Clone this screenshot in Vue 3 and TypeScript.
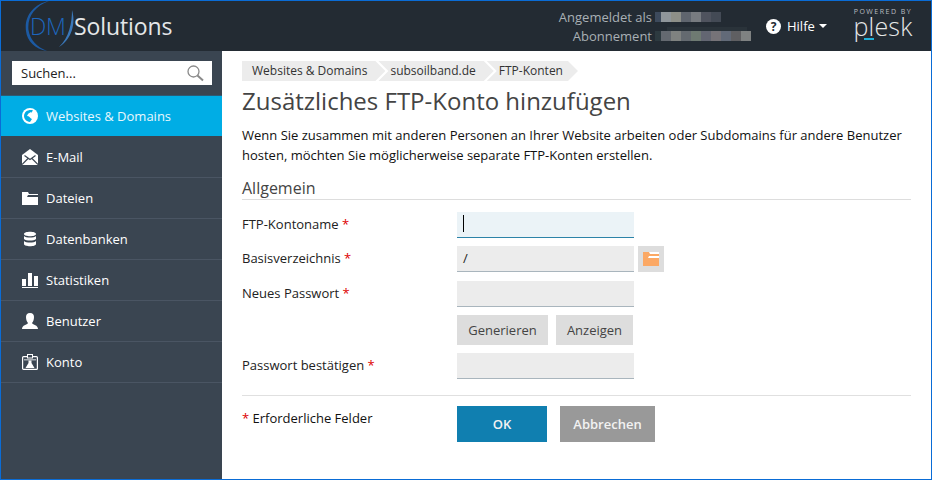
<script setup lang="ts">
const nav = [
  { label: 'Websites & Domains', icon: 'globe', active: true },
  { label: 'E-Mail', icon: 'mail' },
  { label: 'Dateien', icon: 'folder' },
  { label: 'Datenbanken', icon: 'db' },
  { label: 'Statistiken', icon: 'stats' },
  { label: 'Benutzer', icon: 'user' },
  { label: 'Konto', icon: 'badge' },
]
const row1 = ['#3d4a5c', '#8f969b', '#8d8f88', '#5f656e', '#777b80', '#4f535e', '#434a55']
const row2 = ['#2d3a40', '#646970', '#7f8280', '#646a70', '#6e7a72', '#636672', '#767378', '#626a78', '#5f5f62', '#7f8282']
</script>

<template>
  <div class="window">
    <header class="top">
      <div class="logo">
        <svg class="swoosh" width="56" height="50" viewBox="0 0 56 50">
          <path d="M24 0C8 3 -1 16 1 30C2 40 10 48 22 50C12 46 5 39 3.5 29C2 16 10 5 24 0Z" fill="#1c5aa3" />
          <path d="M47 9C51 22 47 38 34 46C44 37 47 22 47 9Z" fill="#3a78ba" />
        </svg>
        <span class="dm">DM</span><span class="sol">Solutions</span>
      </div>
      <div class="account">
        <span class="faint"></span>
        <div class="acc-row">
          <span>Angemeldet als</span>
          <span class="pix"><i v-for="(c, i) in row1" :key="i" :style="{ background: c }"></i></span>
        </div>
        <div class="acc-row">
          <span>Abonnement</span>
          <span class="pix"><i v-for="(c, i) in row2" :key="i" :style="{ background: c }"></i></span>
        </div>
      </div>
      <div class="help">
        <span class="q">?</span>
        <span>Hilfe</span>
        <span class="caret-down"></span>
      </div>
      <div class="plesk">
        <span class="powered">POWERED BY</span>
        <span class="plesk-word">plesk</span>
        <span class="plesk-bar"></span>
      </div>
    </header>

    <div class="body">
      <aside class="side">
        <div class="search-wrap">
          <div class="search">
            <span>Suchen...</span>
            <svg width="18" height="18" viewBox="0 0 18 18" fill="none" stroke="#8a8a8a">
              <circle cx="7.5" cy="7.5" r="5.5" stroke-width="1.3" />
              <path d="M11.5 11.5L17 16.5" stroke-width="2" />
            </svg>
          </div>
        </div>
        <nav>
          <a v-for="n in nav" :key="n.label" class="nav-item" :class="{ active: n.active }">
            <svg width="16" height="16" viewBox="0 0 16 16" fill="#fff">
              <template v-if="n.icon === 'globe'">
                <circle cx="8" cy="8" r="8" />
                <path d="M4 3.5C6 2 9 1.6 11 2.5L9 5 6.5 5.5 5 8l3 .5 2 2.5-2 3C4.5 13.5 2 11 2 8c0-2 1-3.5 2-4.5z" fill="#00ade5" />
                <path d="M5.5 7l3-3 1 1.5-2 2 2.5 1 1 2.5-2-.5-2-2z" fill="#fff" />
              </template>
              <template v-else-if="n.icon === 'mail'">
                <path d="M0 6L8 0l8 6v10H0z" />
                <path d="M2.5 6.5L8 10.5l5.5-4M0 15.5L6 9.5M16 15.5L10 9.5" fill="none" stroke="#3a4551" stroke-width="1.2" />
              </template>
              <template v-else-if="n.icon === 'folder'">
                <path d="M0 2h6l1 2h9v1H6L5 7h11v8H0z" />
              </template>
              <template v-else-if="n.icon === 'db'">
                <path d="M2 3c0-3 12-3 12 0s-12 3-12 0zM2 5c2 2 10 2 12 0v3c-2 2-10 2-12 0zM2 10c2 2 10 2 12 0v3c0 3-12 3-12 0z" />
              </template>
              <template v-else-if="n.icon === 'stats'">
                <path d="M0 7h4v7H0zM6 1h4v13H6zM12 4h4v10h-4zM0 15h16v1H0z" />
              </template>
              <template v-else-if="n.icon === 'user'">
                <path d="M8 0c3 0 4 2 4 4 0 3-1 5-2 6 1 2 6 2 6 6H0c0-4 5-4 6-6-1-1-2-3-2-6 0-2 1-4 4-4z" />
              </template>
              <template v-else>
                <rect x="0.6" y="2.6" width="14.8" height="12.8" rx="1" fill="none" stroke="#fff" stroke-width="1.2" />
                <rect x="5.5" y="0.5" width="5" height="3.5" fill="#3a4551" stroke="#fff" />
                <rect x="2" y="5" width="12" height="1.5" fill="#a9b0b5" />
                <path d="M6.5 6.5h3v2.5l3 5h-9l3-5z" />
              </template>
            </svg>
            <span>{{ n.label }}</span>
          </a>
        </nav>
      </aside>

      <main class="main">
        <div class="crumbs">
          <span class="crumb">Websites &amp; Domains</span>
          <span class="crumb">subsoilband.de</span>
          <span class="crumb">FTP-Konten</span>
        </div>
        <h1>Zusätzliches FTP-Konto hinzufügen</h1>
        <p class="intro">Wenn Sie zusammen mit anderen Personen an Ihrer Website arbeiten oder Subdomains für andere Benutzer hosten, möchten Sie möglicherweise separate FTP-Konten erstellen.</p>
        <h2>Allgemein</h2>

        <div class="form">
          <label>FTP-Kontoname <b>*</b></label>
          <div class="input focus"><span class="cursor"></span></div>

          <label>Basisverzeichnis <b>*</b></label>
          <div class="with-btn">
            <div class="input">/</div>
            <span class="folder-btn">
              <svg width="16" height="14" viewBox="0 0 16 14">
                <rect width="16" height="14" fill="#fff" />
                <path d="M0 0h6l1 2h9v2H6L5 6h11v8H0z" fill="#fba864" />
              </svg>
            </span>
          </div>

          <label class="third">Neues Passwort <b>*</b></label>
          <div class="input third"></div>

          <span></span>
          <div class="pw-btns">
            <span class="btn">Generieren</span>
            <span class="btn anz">Anzeigen</span>
          </div>

          <label>Passwort bestätigen <b>*</b></label>
          <div class="input"></div>
        </div>

        <div class="foot">
          <span class="req"><b>*</b> Erforderliche Felder</span>
          <div class="actions">
            <span class="act ok">OK</span>
            <span class="act cancel">Abbrechen</span>
          </div>
        </div>
      </main>
    </div>
  </div>
</template>

<style>
html, body { margin: 0; background: #fff; }
</style>

<style scoped>
.window {
  box-sizing: border-box;
  width: 932px;
  height: 480px;
  border: 1px solid #0a6cd6;
  display: flex;
  flex-direction: column;
  font: 13px/18px "Open Sans", sans-serif;
  color: #222;
  overflow: hidden;
}
.top {
  height: 50px;
  flex: none;
  background: #232b33;
  display: flex;
  align-items: center;
}
.logo {
  position: relative;
  width: 300px;
  height: 50px;
  flex: none;
  display: flex;
  align-items: center;
  padding-left: 29px;
  box-sizing: border-box;
  font-size: 23px;
  font-weight: 300;
}
.swoosh { position: absolute; left: 24px; top: 0; }
.dm { color: #1d66bd; position: relative; font-size: 23px; width: 44px; letter-spacing: -0.3px; }
.sol { color: #e4e6e8; position: relative; font-weight: 400; letter-spacing: -0.1px; }
.account {
  position: relative;
  width: 450px;
  flex: none;
  color: #a9b0b5;
  display: flex;
  flex-direction: column;
}
.faint { position: absolute; left: 366px; top: 20px; width: 80px; height: 10px; background: #2a333a; }
.acc-row {
  display: flex;
  height: 19px;
  align-items: center;
  position: relative;
}
.acc-row > span:first-child { width: 351px; flex: none; text-align: right; }
.pix { display: flex; margin-left: 3px; }
.pix i { display: block; width: 10px; height: 10px; }
.pix i:first-child { width: 6px; }
.help {
  flex: none;
  display: flex;
  align-items: center;
  color: #fff;
  gap: 6px;
  margin-left: 15px;
  width: 87px;
}
.q {
  width: 15px; height: 15px; border-radius: 50%;
  background: #fff; color: #232b33;
  font-weight: 700; font-size: 12px; line-height: 15px;
  text-align: center;
}
.caret-down {
  width: 0; height: 0; margin-left: -2px;
  border: 4px solid transparent; border-top-color: #fff; border-bottom: 0;
}
.plesk {
  position: relative;
  flex: none;
  width: 60px;
  height: 50px;
  color: #e5e7e8;
  display: flex;
  flex-direction: column;
  align-items: center;
}
.powered { font-size: 7px; line-height: 8px; letter-spacing: 1.5px; margin-top: 7px; color: #b9bec1; white-space: nowrap; }
.plesk-word { font: 300 25px/18px "Open Sans", sans-serif; letter-spacing: 0.2px; margin-top: 1px; }
.plesk-bar { position: absolute; left: 11px; top: 37px; width: 10px; height: 2px; background: #1fb0d8; }
.body { flex: 1; display: flex; min-height: 0; }
.side {
  width: 221px;
  flex: none;
  background: #3a4551;
}
.search-wrap { height: 45px; padding: 10px 10px 0 11px; box-sizing: border-box; border-bottom: 1px solid #2e5a75; }
.search {
  height: 24px;
  background: #fff;
  display: flex;
  align-items: center;
  justify-content: space-between;
  padding: 0 8px 0 9px;
  color: #222;
}
.nav-item {
  height: 40px;
  display: flex;
  align-items: center;
  gap: 8px;
  padding-left: 21px;
  color: #fff;
  border-bottom: 1px solid #4a5563;
}
.nav-item.active { background: #00ade5; border-bottom-color: #3a4551; color: #e8f8fd; }
.main { flex: 1; padding: 10px 20px 0 20px; min-width: 0; }
.crumbs { display: flex; height: 20px; }
.crumb {
  background: #ececec;
  color: #333;
  font-size: 12px;
  line-height: 20px;
  padding: 0 18px 0 10px;
  clip-path: polygon(0 0, calc(100% - 10px) 0, 100% 50%, calc(100% - 10px) 100%, 0 100%);
}
.crumb + .crumb {
  padding-left: 12px;
  margin-left: -7px;
  clip-path: polygon(0 0, calc(100% - 10px) 0, 100% 50%, calc(100% - 10px) 100%, 0 100%, 10px 50%);
}
.crumb:last-child { padding-right: 15px; }
h1 {
  font-size: 24px;
  line-height: 32px;
  font-weight: 400;
  color: #444;
  margin: 4px 0 0;
}
.intro { margin: 8px 0 0; line-height: 20px; color: #111; }
h2 {
  font-size: 16px;
  line-height: 22px;
  font-weight: 400;
  color: #444;
  margin: 12px 0 0;
  border-bottom: 1px solid #ddd;
}
.form {
  display: grid;
  grid-template-columns: 215px 1fr;
  margin-top: 12px;
  row-gap: 8px;
}
.form label { line-height: 24px; color: #222; }
.form .third { margin-top: 1px; }
b { color: #d00; font-weight: 400; }
.input {
  box-sizing: border-box;
  width: 177px;
  height: 26px;
  background: #ececec;
  border-bottom: 1px solid #a9b5bd;
  padding: 0 6px;
  line-height: 25px;
  position: relative;
}
.input.focus { background: #ebf3f7; border-bottom-color: #2c83a8; }
.cursor { position: absolute; left: 6px; top: 3px; width: 1px; height: 17px; background: #000; }
.with-btn { display: flex; gap: 4px; }
.folder-btn {
  width: 26px; height: 26px;
  background: #ddd;
  display: flex; align-items: center; justify-content: center;
}
.pw-btns { display: flex; gap: 8px; }
.btn {
  height: 30px; width: 91px; line-height: 30px;
  background: #ddd; color: #444;
  text-align: center;
}
.btn.anz { width: 77px; }
.foot {
  margin-top: 16px;
  border-top: 1px solid #e0e0e0;
  display: grid;
  grid-template-columns: 215px 1fr;
  padding-top: 10px;
}
.req { line-height: 24px; color: #111; }
.actions { display: flex; gap: 13px; }
.act {
  height: 36px; line-height: 36px;
  text-align: center;
  color: #f2f2f2;
  font-weight: 600;
}
.ok { width: 90px; background: #107fb0; }
.cancel { width: 95px; background: #999; }
</style>
